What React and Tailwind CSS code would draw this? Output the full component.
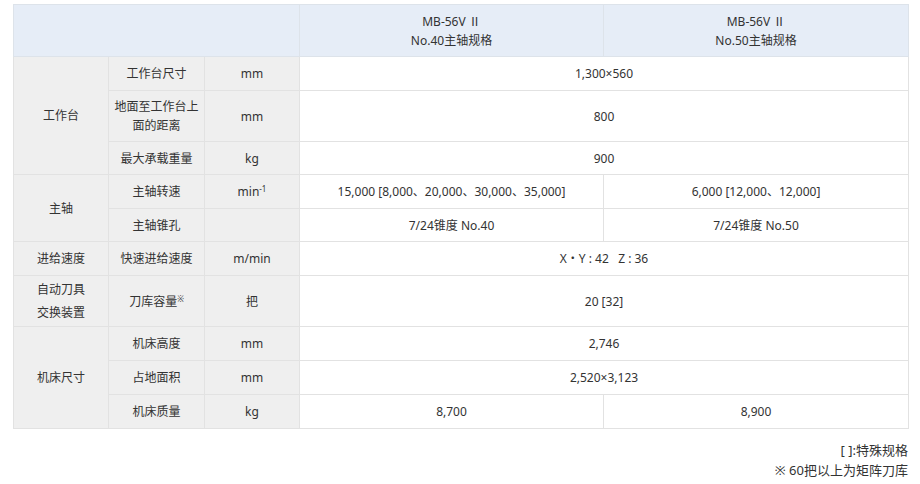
import React from 'react'

const lab = "bg-[#efefef] border border-[#e2e2e2] text-center"
const val = "bg-white border border-[#e2e2e2] text-center"

function App() {
    return (
        <div className="w-[920px] h-[484px] bg-white pl-[13px] pr-[12px] pt-[4px] text-[12px] leading-[19px] text-[#333] font-['Noto_Sans','Noto_Sans_CJK_SC',sans-serif]">
            <table className="w-[895px] border-collapse table-fixed">
                <colgroup>
                    <col className="w-[95px]" />
                    <col className="w-[96px]" />
                    <col className="w-[95px]" />
                    <col className="w-[304px]" />
                    <col className="w-[305px]" />
                </colgroup>
                <thead>
                    <tr className="h-[52px] bg-[#e6edf7]">
                        <th colSpan={3} className="border border-[#dde3ea]"></th>
                        <th className="border border-[#dde3ea] font-normal">MB-56V <span className="font-['Noto_Sans_CJK_SC']">Ⅱ</span><br />No.40主轴规格</th>
                        <th className="border border-[#dde3ea] font-normal">MB-56V <span className="font-['Noto_Sans_CJK_SC']">Ⅱ</span><br />No.50主轴规格</th>
                    </tr>
                </thead>
                <tbody>
                    <tr className="h-[34px]">
                        <td rowSpan={3} className={lab}>工作台</td>
                        <td className={lab}>工作台尺寸</td>
                        <td className={lab}>mm</td>
                        <td colSpan={2} className={val}>1,300×560</td>
                    </tr>
                    <tr className="h-[51px]">
                        <td className={lab}>地面至工作台上<br />面的距离</td>
                        <td className={lab}>mm</td>
                        <td colSpan={2} className={val}>800</td>
                    </tr>
                    <tr className="h-[33px]">
                        <td className={lab}>最大承载重量</td>
                        <td className={lab}>kg</td>
                        <td colSpan={2} className={val}>900</td>
                    </tr>
                    <tr className="h-[34px]">
                        <td rowSpan={2} className={lab}>主轴</td>
                        <td className={lab}>主轴转速</td>
                        <td className={lab}>min<sup className="text-[8px]">-1</sup></td>
                        <td className={val}>15,000 [8,000、20,000、30,000、35,000]</td>
                        <td className={val}>6,000 [12,000、12,000]</td>
                    </tr>
                    <tr className="h-[33px]">
                        <td className={lab}>主轴锥孔</td>
                        <td className={lab}></td>
                        <td className={val}>7/24锥度 No.40</td>
                        <td className={val}>7/24锥度 No.50</td>
                    </tr>
                    <tr className="h-[34px]">
                        <td className={lab}>进给速度</td>
                        <td className={lab}>快速进给速度</td>
                        <td className={lab}>m/min</td>
                        <td colSpan={2} className={val}>X・Y : 42&nbsp;&nbsp;&nbsp;Z : 36</td>
                    </tr>
                    <tr className="h-[51px]">
                        <td className={lab + " leading-[23px]"}>自动刀具<br />交换装置</td>
                        <td className={lab}>刀库容量<sup className="text-[8px]">※</sup></td>
                        <td className={lab}>把</td>
                        <td colSpan={2} className={val}>20 [32]</td>
                    </tr>
                    <tr className="h-[34px]">
                        <td rowSpan={3} className={lab}>机床尺寸</td>
                        <td className={lab}>机床高度</td>
                        <td className={lab}>mm</td>
                        <td colSpan={2} className={val}>2,746</td>
                    </tr>
                    <tr className="h-[34px]">
                        <td className={lab}>占地面积</td>
                        <td className={lab}>mm</td>
                        <td colSpan={2} className={val}>2,520×3,123</td>
                    </tr>
                    <tr className="h-[34px]">
                        <td className={lab}>机床质量</td>
                        <td className={lab}>kg</td>
                        <td className={val}>8,700</td>
                        <td className={val}>8,900</td>
                    </tr>
                </tbody>
            </table>
            <div className="mt-[11px] text-right text-[13px] leading-[20px]">
                <p>[ ]:特殊规格</p>
                <p>※ 60把以上为矩阵刀库</p>
            </div>
        </div>
    )
}

export default App
